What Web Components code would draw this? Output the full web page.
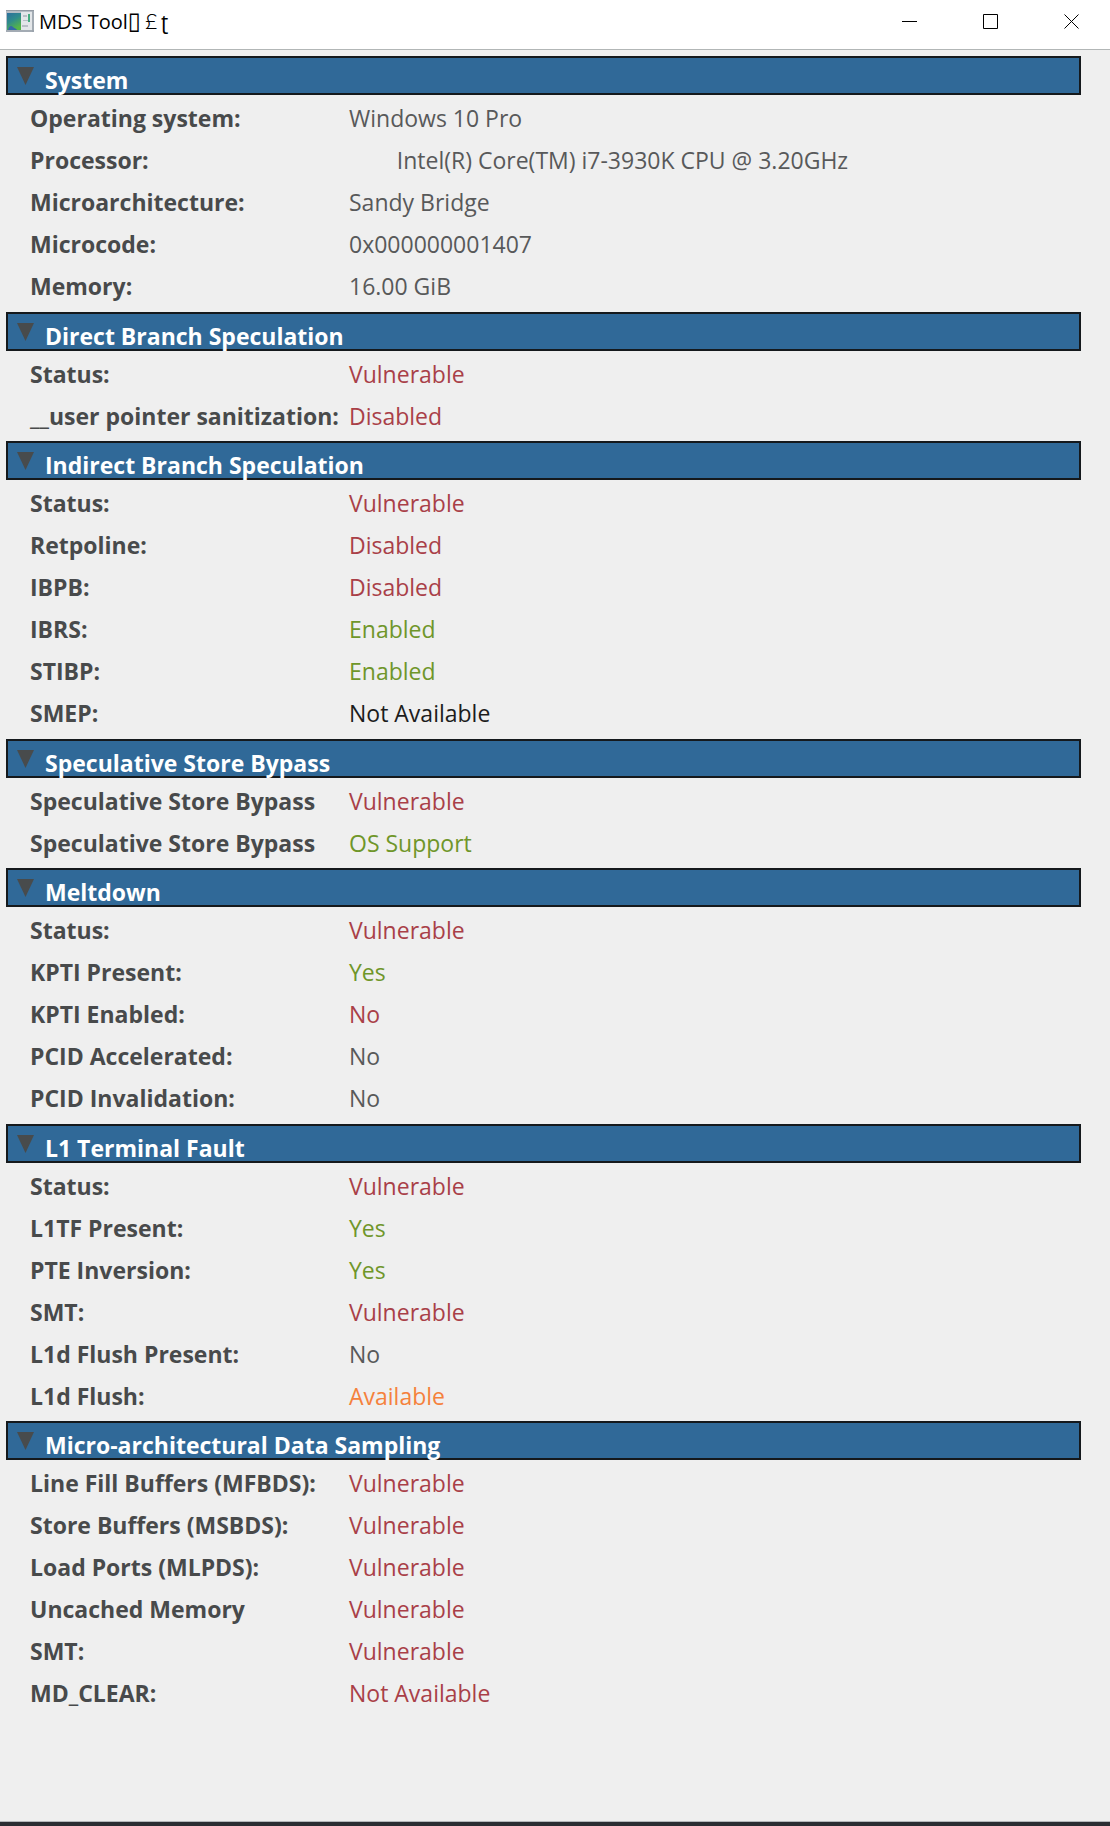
<!DOCTYPE html>
<html lang="en">
<head>
<meta charset="utf-8">
<title>MDS Tool</title>
<style>
    html, body {
        height: 100%;
        margin: 0;
    }

    body {
        font-family: "Open Sans", "Noto Sans", sans-serif;
        font-size: 23px;
        line-height: 32px;
        color: #58595a;
    }
</style>
</head>
<body>
<app-window>
    <title-bar slot="title"></title-bar>

    <info-section heading="System">
        <info-row label="Operating system:">Windows 10 Pro</info-row>
        <info-row label="Processor:">        Intel(R) Core(TM) i7-3930K CPU @ 3.20GHz</info-row>
        <info-row label="Microarchitecture:">Sandy Bridge</info-row>
        <info-row label="Microcode:">0x000000001407</info-row>
        <info-row label="Memory:">16.00 GiB</info-row>
    </info-section>

    <info-section heading="Direct Branch Speculation">
        <info-row label="Status:" state="bad">Vulnerable</info-row>
        <info-row label="__user pointer sanitization:" state="bad">Disabled</info-row>
    </info-section>

    <info-section heading="Indirect Branch Speculation">
        <info-row label="Status:" state="bad">Vulnerable</info-row>
        <info-row label="Retpoline:" state="bad">Disabled</info-row>
        <info-row label="IBPB:" state="bad">Disabled</info-row>
        <info-row label="IBRS:" state="good">Enabled</info-row>
        <info-row label="STIBP:" state="good">Enabled</info-row>
        <info-row label="SMEP:" state="none">Not Available</info-row>
    </info-section>

    <info-section heading="Speculative Store Bypass">
        <info-row label="Speculative Store Bypass" state="bad">Vulnerable</info-row>
        <info-row label="Speculative Store Bypass" state="good">OS Support</info-row>
    </info-section>

    <info-section heading="Meltdown">
        <info-row label="Status:" state="bad">Vulnerable</info-row>
        <info-row label="KPTI Present:" state="good">Yes</info-row>
        <info-row label="KPTI Enabled:" state="bad">No</info-row>
        <info-row label="PCID Accelerated:">No</info-row>
        <info-row label="PCID Invalidation:">No</info-row>
    </info-section>

    <info-section heading="L1 Terminal Fault">
        <info-row label="Status:" state="bad">Vulnerable</info-row>
        <info-row label="L1TF Present:" state="good">Yes</info-row>
        <info-row label="PTE Inversion:" state="good">Yes</info-row>
        <info-row label="SMT:" state="bad">Vulnerable</info-row>
        <info-row label="L1d Flush Present:">No</info-row>
        <info-row label="L1d Flush:" state="warn">Available</info-row>
    </info-section>

    <info-section heading="Micro-architectural Data Sampling">
        <info-row label="Line Fill Buffers (MFBDS):" state="bad">Vulnerable</info-row>
        <info-row label="Store Buffers (MSBDS):" state="bad">Vulnerable</info-row>
        <info-row label="Load Ports (MLPDS):" state="bad">Vulnerable</info-row>
        <info-row label="Uncached Memory" state="bad">Vulnerable</info-row>
        <info-row label="SMT:" state="bad">Vulnerable</info-row>
        <info-row label="MD_CLEAR:" state="bad">Not Available</info-row>
    </info-section>
</app-window>

<script>
class AppWindow extends HTMLElement {
    constructor() {
        super();
        this.attachShadow({mode: 'open'}).innerHTML = `
            <style>
                :host {
                    display: flex;
                    flex-direction: column;
                    box-sizing: border-box;
                    min-height: 100%;
                    background: #efefef;
                    border-bottom: 4px solid #2b2d33;
                }

                main {
                    flex: 1;
                    display: flex;
                    flex-direction: column;
                    justify-content: space-between;
                    gap: 3px;
                    padding: 6px 29px 107px 6px;
                    border-bottom: 1px solid #b4b6ba;
                }
            </style>
            <slot name="title"></slot>
            <main><slot></slot></main>
        `;
    }
}

class TitleBar extends HTMLElement {
    constructor() {
        super();
        this.attachShadow({mode: 'open'}).innerHTML = `
            <style>
                :host {
                    display: flex;
                    align-items: stretch;
                    height: 49px;
                    background: #fff;
                    border-bottom: 1px solid #b2b6b6;
                    color: #000;
                }

                .icon {
                    width: 28px;
                    height: 22px;
                    margin: 10px 5px 0 6px;
                }

                h1 {
                    flex: 1;
                    margin: 0;
                    font-size: 20px;
                    font-weight: 400;
                    line-height: 44px;
                    white-space: nowrap;
                }

                .box {
                    font-family: "DejaVu Sans", sans-serif;
                    font-size: 24px;
                    line-height: 20px;
                }

                .pound {
                    font-family: "Noto Sans CJK SC", sans-serif;
                    font-weight: 300;
                    line-height: 20px;
                }

                nav {
                    display: flex;
                    gap: 4px;
                }

                button {
                    width: 77px;
                    height: 43px;
                    padding: 0;
                    border: 0;
                    background: none;
                    font-size: 0;
                }

                button svg {
                    width: 15px;
                    height: 15px;
                    fill: none;
                    stroke: #000;
                }
            </style>
            <svg class="icon" viewBox="0 0 28 22" aria-hidden="true">
                <defs>
                    <linearGradient id="screen" x1="0" y1="0" x2=".5" y2="1">
                        <stop offset="0" stop-color="#2c6f9d"/>
                        <stop offset=".5" stop-color="#2f8c8c"/>
                        <stop offset="1" stop-color="#55b548"/>
                    </linearGradient>
                </defs>
                <rect width="28" height="22" fill="#b4bcc4"/>
                <rect x="1" y="3" width="14" height="17" fill="url(#screen)"/>
                <path d="M2 20c1-4 3-5 5-3s3 1 4 3z" fill="#3468a8"/>
                <rect x="15" y="2" width="11" height="18" fill="#e3e6e9"/>
                <path d="M17 5h4v2h-4zM17 10h5v1h-5zM16 15h6v2h-6z" fill="#b9bec6"/>
                <rect x="22" y="4" width="2" height="8" fill="#45ad80"/>
                <path d="M0 .5h28M27 0v22M0 21h28" stroke="#929aa3" fill="none"/>
            </svg>
            <h1>MDS Tool<span class="box">▯</span><span class="pound">￡</span>ʈ</h1>
            <nav>
                <button aria-label="Minimize"><svg viewBox="0 0 15 15"><path d="M0 7.5h15"/></svg></button>
                <button aria-label="Maximize"><svg viewBox="0 0 15 15"><path d="M.5.5h14v14h-14z"/></svg></button>
                <button aria-label="Close"><svg viewBox="0 0 15 15"><path d="M.5.5l14 14M14.5.5l-14 14"/></svg></button>
            </nav>
        `;
    }
}

class InfoSection extends HTMLElement {
    constructor() {
        super();
        this.attachShadow({mode: 'open'}).innerHTML = `
            <style>
                :host {
                    display: block;
                }

                h2 {
                    margin: 0;
                    font-size: inherit;
                }

                button {
                    display: flex;
                    align-items: flex-start;
                    gap: 11px;
                    box-sizing: border-box;
                    width: 100%;
                    height: 39px;
                    padding: 6px 9px 0;
                    border: 2px solid #15191c;
                    background: #306998;
                    color: #fff;
                    font: inherit;
                    font-weight: 700;
                    text-align: left;
                }

                svg {
                    flex: none;
                    width: 17px;
                    height: 18px;
                    margin-top: 3px;
                    fill: #484b4c;
                }

                button[aria-expanded="false"] svg {
                    transform: rotate(-90deg);
                }

                .rows {
                    padding-top: 2px;
                }
            </style>
            <h2>
                <button aria-expanded="true" aria-controls="rows">
                    <svg viewBox="0 0 17 18" aria-hidden="true"><path d="M0 0h17L8.5 18z"/></svg>
                    <span></span>
                </button>
            </h2>
            <div class="rows" id="rows"><slot></slot></div>
        `;
    }

    connectedCallback() {
        const button = this.shadowRoot.querySelector('button');
        const rows = this.shadowRoot.querySelector('.rows');
        button.querySelector('span').textContent = this.getAttribute('heading');
        button.onclick = () => {
            rows.hidden = !rows.hidden;
            button.setAttribute('aria-expanded', String(!rows.hidden));
        };
    }
}

class InfoRow extends HTMLElement {
    constructor() {
        super();
        this.attachShadow({mode: 'open'}).innerHTML = `
            <style>
                :host {
                    display: grid;
                    grid-template-columns: 319px 1fr;
                    align-items: center;
                    height: 42px;
                    padding-left: 24px;
                }

                .label {
                    color: #484a4b;
                    font-weight: 700;
                    white-space: nowrap;
                }

                .value {
                    white-space: pre;
                }

                :host([state="bad"]) .value { color: #a93f48; }
                :host([state="good"]) .value { color: #6f962a; }
                :host([state="warn"]) .value { color: #f5813c; }
                :host([state="none"]) .value { color: #1c1c1c; }
            </style>
            <span class="label"></span>
            <span class="value"><slot></slot></span>
        `;
    }

    connectedCallback() {
        this.shadowRoot.querySelector('.label').textContent = this.getAttribute('label');
    }
}

customElements.define('app-window', AppWindow);
customElements.define('title-bar', TitleBar);
customElements.define('info-section', InfoSection);
customElements.define('info-row', InfoRow);
</script>
</body>
</html>
